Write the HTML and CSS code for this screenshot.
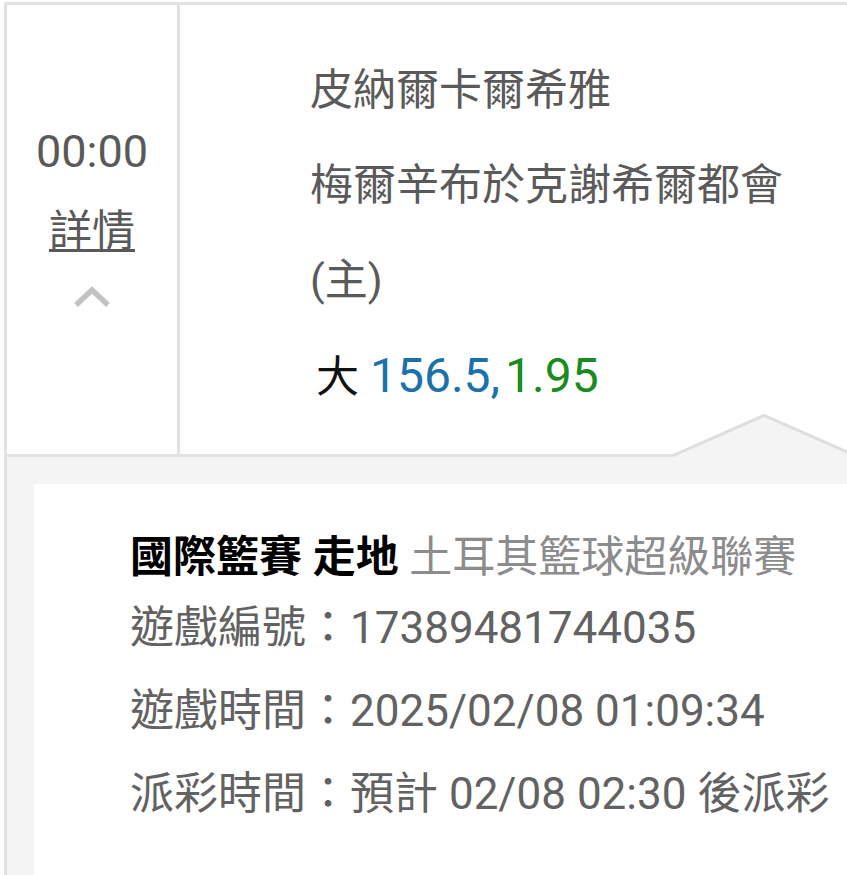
FILE: index.html
```html
<!DOCTYPE html>
<html lang="zh-Hant">
<head>
<meta charset="utf-8">
<title>注單詳情</title>
<link rel="stylesheet" href="styles.css">
</head>
<body>
<div class="wrap">
  <div class="row">
    <div class="time-col">
      <div class="time">00:00</div>
      <a class="detail-link" href="#">詳情</a>
      <svg class="chev" width="38" height="22" viewBox="0 0 38 22">
        <polyline points="3,19 19,4 35,19" fill="none" stroke="#c2c2c2" stroke-width="5.5"/>
      </svg>
    </div>
    <div class="info-col">
      <div class="team">皮納爾卡爾希雅</div>
      <div class="team">梅爾辛布於克謝希爾都會(主)</div>
      <div class="bet"><span class="bet-type">大</span><span class="line">156.5,</span><span class="odds">1.95</span></div>
    </div>
    <svg class="notch" width="200" height="45" viewBox="0 0 200 45">
      <polygon points="0,46 94,4 188,46" fill="#f4f4f4"/>
      <polyline points="3,43.5 94,3.5 185,43.5" fill="none" stroke="#dedede" stroke-width="3"/>
    </svg>
  </div>
  <div class="detail">
    <div class="card">
      <div class="title"><b class="sport">國際籃賽 走地</b> <span class="league">土耳其籃球超級聯賽</span></div>
      <div class="info-line">遊戲編號：17389481744035</div>
      <div class="info-line">遊戲時間：2025/02/08 01:09:34</div>
      <div class="info-line">派彩時間：預計 02/08 02:30 後派彩</div>
    </div>
  </div>
</div>
</body>
</html>
```

FILE: styles.css
```css
html, body {
  margin: 0;
  padding: 0;
  background: #fff;
  overflow: hidden;
}
body {
  font-family: Roboto, "Noto Sans CJK TC", sans-serif;
  color: #5a5a5a;
}
.wrap {
  margin: 2px 0 0 4px;
  border-top: 3px solid #e2e2e2;
  border-left: 3px solid #e2e2e2;
}
.row {
  position: relative;
  display: flex;
  border-bottom: 3px solid #e2e2e2;
}
.time-col {
  width: 173px;
  flex: none;
  border-right: 3px solid #e2e2e2;
  display: flex;
  flex-direction: column;
  align-items: center;
  padding-top: 122px;
  box-sizing: border-box;
}
.time {
  font-size: 45px;
  line-height: 50px;
  color: #595959;
}
.detail-link {
  margin-top: 26px;
  font-size: 43px;
  line-height: 56px;
  color: #595959;
  text-decoration: underline;
  text-decoration-thickness: 3px;
  text-underline-offset: 3px;
}
.chev {
  display: block;
  margin-top: 27px;
}
.info-col {
  padding: 38px 0 29px 130px;
  font-size: 43px;
  line-height: 95px;
  color: #5a5a5a;
  flex: 1;
}
.bet {
  white-space: nowrap;
}
.bet-type {
  color: #111;
  margin-left: 6px;
  margin-right: 11px;
}
.line {
  color: #1b72aa;
  font-size: 48px;
  margin-right: 5px;
}
.odds {
  color: #1a8c1e;
  font-size: 48px;
}
.notch {
  position: absolute;
  left: 663px;
  bottom: -3px;
  display: block;
}
.detail {
  background: #f4f4f4;
  padding: 27px 0 2px 27px;
}
.card {
  background: #fff;
  padding: 43px 0 39px 96px;
}
.title {
  font-size: 43px;
  line-height: 60px;
  white-space: nowrap;
}
.sport {
  color: #000;
  font-weight: 700;
}
.league {
  color: #8c8c8c;
}
.info-line {
  font-size: 44px;
  line-height: 83px;
  color: #626262;
  white-space: nowrap;
}
```
